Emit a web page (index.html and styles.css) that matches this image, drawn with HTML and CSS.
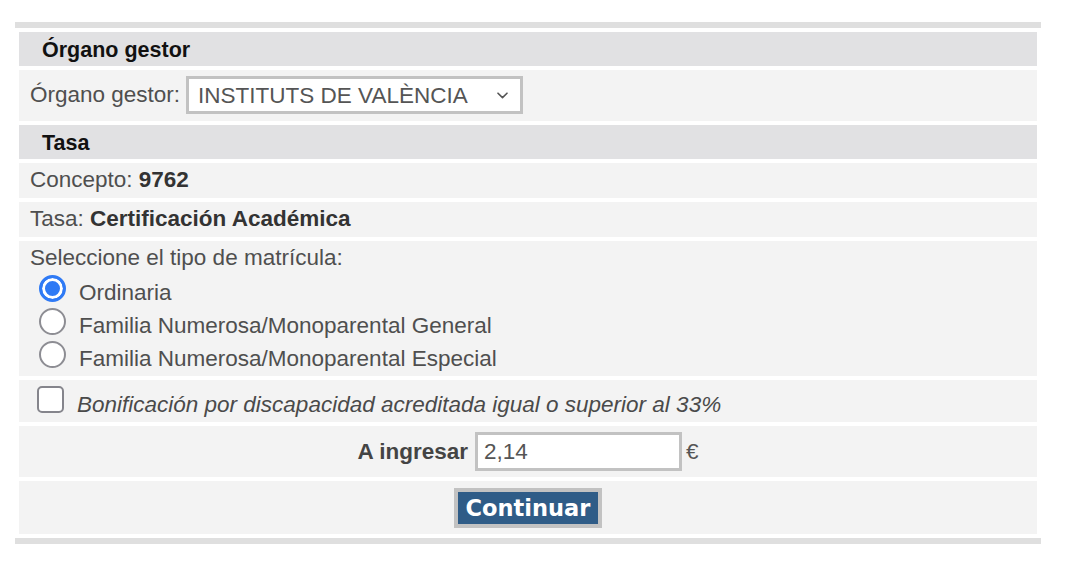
FILE: index.html
```html
<!DOCTYPE html>
<html lang="es">
<head>
<meta charset="utf-8">
<title>Tasa</title>
<link rel="stylesheet" href="styles.css">
</head>
<body>
<form class="panel">
  <div class="head">Órgano gestor</div>
  <div class="row row-select">
    <label class="lbl" for="org">Órgano gestor:</label>
    <span class="select-wrap">
      <select id="org" class="select">
        <option>INSTITUTS DE VALÈNCIA</option>
      </select>
      <svg class="chev" width="11" height="7" viewBox="0 0 11 7"><path d="M1 1.2 L5.5 5.6 L10 1.2" fill="none" stroke="#555" stroke-width="1.6" stroke-linecap="round" stroke-linejoin="round"/></svg>
    </span>
  </div>
  <div class="head">Tasa</div>
  <div class="row row-text">Concepto: <b>9762</b></div>
  <div class="row row-text">Tasa: <b>Certificación Académica</b></div>
  <div class="row row-radios">
    <div class="radio-title">Seleccione el tipo de matrícula:</div>
    <div class="radio-list">
      <label class="opt"><input type="radio" name="tipo" class="radio" checked><span class="opt-text">Ordinaria</span></label>
      <label class="opt"><input type="radio" name="tipo" class="radio"><span class="opt-text">Familia Numerosa/Monoparental General</span></label>
      <label class="opt"><input type="radio" name="tipo" class="radio"><span class="opt-text">Familia Numerosa/Monoparental Especial</span></label>
    </div>
  </div>
  <label class="row row-check"><input type="checkbox" class="check"><span class="check-text">Bonificación por discapacidad acreditada igual o superior al 33%</span></label>
  <div class="row row-amount">
    <span class="amount-lbl">A ingresar</span>
    <input class="amount" type="text" value="2,14">
    <span class="euro">€</span>
  </div>
  <div class="row row-button">
    <button type="button" class="btn">Continuar</button>
  </div>
</form>
</body>
</html>
```
FILE: styles.css
```css
* { box-sizing: border-box; }

body {
  margin: 0;
  background: #ffffff;
  font-family: "Liberation Sans", Arial, Helvetica, sans-serif;
  font-size: 22.5px;
  color: #4f4f4f;
}

.panel {
  margin: 22px 0 0 15px;
  width: 1026px;
  border-top: 6px solid #dfdfdf;
  border-bottom: 6px solid #dfdfdf;
  padding: 4px;
  display: flex;
  flex-direction: column;
  gap: 4px;
}

.head {
  background: #e1e1e3;
  height: 34px;
  padding: 6px 23px 4px;
  font-size: 21.5px;
  line-height: 24px;
  font-weight: bold;
  color: #111;
}

.row {
  background: #f3f3f3;
  padding-left: 11px;
  line-height: 26px;
}

.row b { color: #333; }

.row-select {
  display: flex;
  align-items: center;
  padding-top: 6px;
  padding-bottom: 7px;
}

.lbl { color: #4f4f4f; }

.select-wrap {
  position: relative;
  display: inline-flex;
  margin-left: 6px;
}

.select {
  appearance: none;
  -webkit-appearance: none;
  width: 337px;
  height: 38px;
  border: 3px solid #c2c2c2;
  border-radius: 0;
  background: #fff;
  padding: 1px 0 0 9px;
  font-family: "Liberation Sans", Arial, Helvetica, sans-serif;
  font-size: 22.5px;
  color: #555;
  outline: none;
}

.chev {
  position: absolute;
  right: 15px;
  top: 16px;
}

.row-text {
  height: 35px;
  padding-top: 4px;
}

.row-radios {
  padding-top: 4px;
  padding-bottom: 2px;
}

.radio-list {
  margin-top: 4px;
  display: flex;
  flex-direction: column;
}

.opt {
  display: flex;
  align-items: flex-start;
  height: 33px;
}

.radio {
  appearance: none;
  -webkit-appearance: none;
  margin: 0 13px 0 9px;
  width: 27px;
  height: 27px;
  border-radius: 50%;
  border: 2px solid #8d8d93;
  background: #fff;
  flex: none;
}

.radio:checked {
  border: 3px solid #2f7af5;
  background: #2f7af5;
  box-shadow: inset 0 0 0 3px #fff;
}

.opt-text { padding-top: 5px; }

.row-check {
  display: flex;
  align-items: flex-start;
  height: 42px;
  padding-top: 6px;
}

.check {
  appearance: none;
  -webkit-appearance: none;
  margin: 0 13px 0 7px;
  width: 27px;
  height: 27px;
  border: 2px solid #85858c;
  border-radius: 5px;
  background: #fff;
  flex: none;
}

.check-text {
  margin-top: 6px;
  font-style: italic;
  color: #4a4a4a;
}

.row-amount {
  display: flex;
  justify-content: center;
  align-items: center;
  padding: 6px 0;
}

.amount-lbl {
  font-weight: bold;
  color: #444;
  margin-right: 7px;
}

.amount {
  width: 207px;
  height: 39px;
  border: 3px solid #c2c2c2;
  background: #fff;
  padding: 1px 0 0 6px;
  font-family: "Liberation Sans", Arial, Helvetica, sans-serif;
  font-size: 22.5px;
  color: #555;
  outline: none;
  margin: 0;
}

.euro {
  margin-left: 4px;
  color: #555;
}

.row-button {
  display: flex;
  justify-content: center;
  padding: 7px 0 6px;
}

.btn {
  width: 148px;
  height: 40px;
  border: 4px solid #c2c2c2;
  background: #2f5c87;
  color: #fff;
  font-family: "DejaVu Sans", Verdana, sans-serif;
  font-weight: bold;
  font-size: 22.5px;
  line-height: 31px;
  padding: 1px 0 0;
  margin: 0;
  border-radius: 0;
}
```
